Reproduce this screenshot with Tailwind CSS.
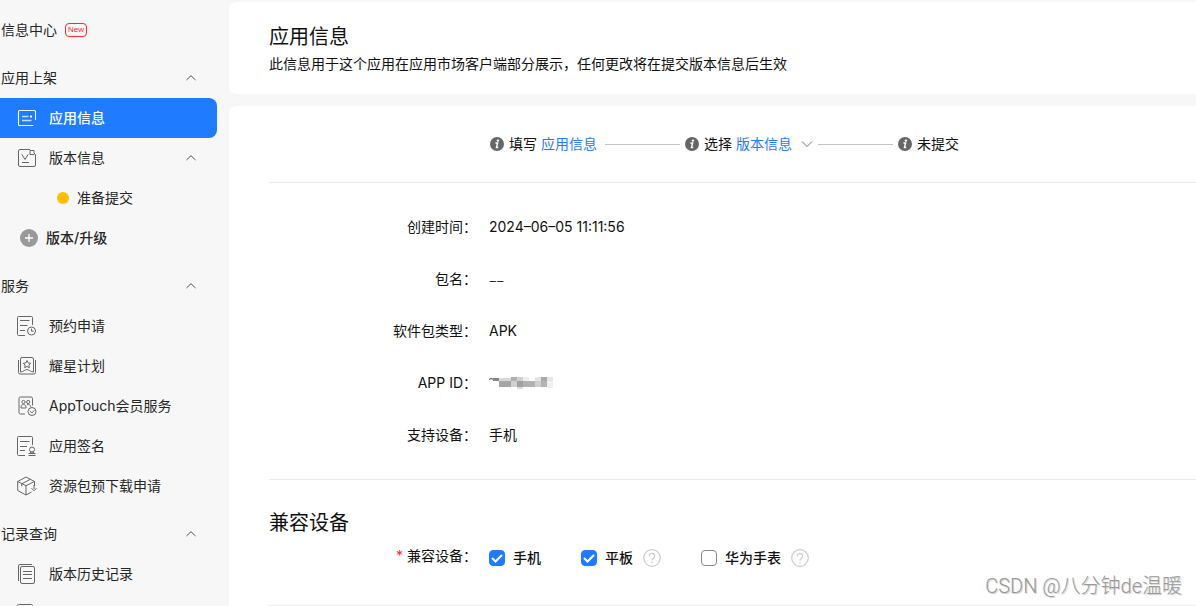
<!DOCTYPE html>
<html lang="zh-CN">
<head>
<meta charset="utf-8">
<meta name="viewport" content="width=device-width, initial-scale=1">
<title>应用信息</title>
<script src="https://cdn.jsdelivr.net/npm/@tailwindcss/browser@4"></script>
</head>
<body class="flex h-screen overflow-hidden bg-[#f7f7f7] font-[Inter,'Noto_Sans_CJK_SC',sans-serif] text-sm text-[#262626]">

<svg class="hidden" aria-hidden="true">
  <symbol id="up" viewBox="0 0 12 12"><path d="M1.500 8 6 3.700 10.500 8" fill="none" stroke="currentColor"/></symbol>
  <symbol id="down" viewBox="0 0 12 12"><path d="M1 3.500 6 8.500 11 3.500" fill="none" stroke="currentColor"/></symbol>
  <symbol id="info" viewBox="0 0 16 16"><circle cx="8" cy="8" r="7" fill="#666"/><circle cx="8.900" cy="4.600" r="1.200" fill="#fff"/><path d="M6.400 7.100h2.200L7.500 11.400h1.800" fill="none" stroke="#fff" stroke-width="1.500"/></symbol>
  <symbol id="help" viewBox="0 0 18 18"><circle cx="9" cy="9" r="8.300" fill="none" stroke="#ccc" stroke-width="1.200"/><path d="M6.300 7.200a2.700 2.700 0 1 1 4.200 2.100c-1 .7-1.500 1.100-1.500 2.300" fill="none" stroke="#ccc" stroke-width="1.200"/><circle cx="9" cy="13.600" r=".8" fill="#ccc"/></symbol>
  <symbol id="tick" viewBox="0 0 16 16"><path d="m3 8 3.500 3.500 6.500-6.500" fill="none" stroke="#fff" stroke-width="2"/></symbol>
</svg>

<nav class="flex w-[217px] shrink-0 flex-col gap-2 pt-[10px]">
  <a href="#" class="flex h-10 shrink-0 items-center gap-2 pl-px">信息中心
    <span class="flex h-[14px] items-center rounded-sm border border-[#fa2a2d] px-[2px] font-['Liberation_Sans',sans-serif] text-[8px] leading-none text-[#fa2a2d]">New</span>
  </a>

  <section>
    <button type="button" class="flex h-10 w-full items-center justify-between pl-px pr-5">应用上架<svg class="size-3 text-[#555]"><use href="#up"/></svg></button>
    <a href="#" class="flex h-10 items-center gap-3 rounded-r-lg bg-[#1f7bff] pl-[17px] font-medium text-white">
      <svg class="size-5" viewBox="0 0 20 20" fill="none" stroke="currentColor"><path d="M18.500 12V3.500a1 1 0 0 0-1-1h-15a1 1 0 0 0-1 1v13a1 1 0 0 0 1 1h14" stroke-width="1.100"/><path d="M5 8.500h6.500M5 12.500h9.500" stroke-width="1.500" opacity=".75"/><path d="M13 8.500h2" stroke-width="2"/></svg>应用信息</a>
    <button type="button" class="flex h-10 w-full items-center gap-3 pl-[17px] pr-5">
      <svg class="size-5 text-[#666]" viewBox="0 0 20 20" fill="none" stroke="currentColor"><path d="M13 1.500H3a1.500 1.500 0 0 0-1.500 1.500v14A1.500 1.500 0 0 0 3 18.500h14a1.500 1.500 0 0 0 1.500-1.500V6.500L17 5V2.500h-4v4h4.500"/><path d="m4.800 6.300 3.200 5.200 3.200-5.200M5 14.500h7"/></svg><span class="flex-1 text-left">版本信息</span><svg class="size-3 text-[#555]"><use href="#up"/></svg></button>
    <a href="#" class="flex h-10 items-center gap-2 pl-[57px]"><span class="size-3 rounded-full bg-[#ffbf00]"></span>准备提交</a>
    <a href="#" class="flex h-10 items-center gap-2 pl-5 font-medium">
      <svg class="size-[18px]" viewBox="0 0 18 18"><circle cx="9" cy="9" r="9" fill="#999"/><path d="M9 5v8M5 9h8" stroke="#fff" stroke-width="1.300"/></svg>版本/升级</a>
  </section>

  <section>
    <button type="button" class="flex h-10 w-full items-center justify-between pl-px pr-5">服务<svg class="size-3 text-[#555]"><use href="#up"/></svg></button>
    <a href="#" class="flex h-10 items-center gap-3 pl-[17px]">
      <svg class="size-5 text-[#666]" viewBox="0 0 20 20" fill="none" stroke="currentColor"><path d="M15.500 9V1.500a1 1 0 0 0-1-1h-13a1 1 0 0 0-1 1v17a1 1 0 0 0 1 1H8M3 4.500h9.500M3 9.500h7.500M3 14.500h5"/><circle cx="14.500" cy="15" r="4"/><path d="M14.500 12.700v2.500h2.200"/></svg>预约申请</a>
    <a href="#" class="flex h-10 items-center gap-3 pl-[17px]">
      <svg class="size-5 text-[#666]" viewBox="0 0 20 20" fill="none" stroke="currentColor"><path d="M1.500 4v12.500a1.500 1.500 0 0 0 1.500 1.500h14a1.500 1.500 0 0 0 1.500-1.500V4"/><path d="M3.500 16V3A1.500 1.500 0 0 1 5 1.500h10A1.500 1.500 0 0 1 16.500 3v13c-3-.3-5-2.500-6.500-2.500S6.500 15.700 3.500 16z"/><path d="m10 4.500 1.200 2.400 2.500.4-1.800 1.800.4 2.600L10 10.500l-2.300 1.200.4-2.600-1.800-1.800 2.500-.4z"/></svg>耀星计划</a>
    <a href="#" class="flex h-10 items-center gap-3 pl-[17px]">
      <svg class="size-5 text-[#666]" viewBox="0 0 20 20" fill="none" stroke="currentColor"><path d="M15.500 9.500V2.500a1.500 1.500 0 0 0-1.500-1.500H3.500A1.500 1.500 0 0 0 2 2.500v14A1.500 1.500 0 0 0 3.500 18H8"/><circle cx="6.500" cy="6" r="1.600"/><circle cx="11.200" cy="6" r="1.600"/><path d="M4 12v-1.200c0-3 5-3 5 0V12zM10 8.800c2-.8 3.800.3 3.800 2"/><circle cx="15" cy="15.500" r="4"/><path d="m12.900 15 2 2 2.400-2.700"/></svg>AppTouch会员服务</a>
    <a href="#" class="flex h-10 items-center gap-3 pl-[17px]">
      <svg class="size-5 text-[#666]" viewBox="0 0 20 20" fill="none" stroke="currentColor"><path d="M15.500 9V1.500a1 1 0 0 0-1-1h-13a1 1 0 0 0-1 1v17a1 1 0 0 0 1 1H8M3 5.500h9.500M3 10.500h7M3 14.500h5"/><circle cx="15" cy="13.500" r="2.500"/><path d="M14 16l-.5 1h3l-.5-1M11.500 17.500h7M11.500 19.500h7"/></svg>应用签名</a>
    <a href="#" class="flex h-10 items-center gap-3 pl-[17px]">
      <svg class="size-5 text-[#666]" viewBox="0 0 20 20" fill="none" stroke="currentColor" stroke-linejoin="round"><path d="M17.500 10V5.500L9 1 .7 5.500v9L9 19l5.500-3M.7 5.500 9 9.700l8.500-4.200M9 9.700V19M5 7.700 13.300 3.300M4.700 7.800v2.500"/><path d="M17 9v4M14.500 12.200l2.500 2.600 2.500-2.600"/></svg>资源包预下载申请</a>
  </section>

  <section>
    <button type="button" class="flex h-10 w-full items-center justify-between pl-px pr-5">记录查询<svg class="size-3 text-[#555]"><use href="#up"/></svg></button>
    <a href="#" class="flex h-10 items-center gap-3 pl-[17px]">
      <svg class="size-5 text-[#666]" viewBox="0 0 20 20" fill="none" stroke="currentColor"><path d="M15 .5H3A1.500 1.500 0 0 0 1.500 2v15"/><rect x="3.500" y="2.500" width="14" height="17" rx="1.500"/><path d="M6 7.500h9M6 10.500h9M6 14.500h9"/></svg>版本历史记录</a>
    <a href="#" aria-label="更多记录" class="flex h-10 items-center gap-3 pl-[17px]">
      <svg class="size-5 text-[#666]" viewBox="0 0 20 20" fill="none" stroke="currentColor"><path d="M15.500 9V1.500a1 1 0 0 0-1-1h-13a1 1 0 0 0-1 1v17a1 1 0 0 0 1 1H8"/></svg></a>
  </section>
</nav>

<main class="ml-3 flex min-w-0 flex-1 flex-col gap-3 pt-[2px] text-[#111]">
  <header class="rounded-l-lg bg-white pb-[18px] pl-10 pt-5">
    <h1 class="text-xl leading-[30px]">应用信息</h1>
    <p class="leading-6">此信息用于这个应用在应用市场客户端部分展示，任何更改将在提交版本信息后生效</p>
  </header>

  <div class="flex-1 rounded-tl-lg bg-white pl-10">
    <div class="flex h-[77px] items-center border-b border-[#ebebeb] pl-[220px]">
      <span class="flex items-center gap-1"><svg class="size-4"><use href="#info"/></svg>填写 <a href="#" class="text-[#1f7bff]">应用信息</a></span>
      <span class="ml-2 mr-1 h-px w-[75px] bg-[#c4c4c4]"></span>
      <span class="flex items-center gap-1"><svg class="size-4"><use href="#info"/></svg>选择 <a href="#" class="text-[#1f7bff]">版本信息</a></span>
      <button type="button" aria-label="展开版本" class="ml-[9px]"><svg class="size-3 text-[#777]"><use href="#down"/></svg></button>
      <span class="ml-[5px] mr-1 h-px w-[75px] bg-[#c4c4c4]"></span>
      <span class="flex items-center gap-1"><svg class="size-4"><use href="#info"/></svg>未提交</span>
    </div>

    <dl class="grid auto-rows-[52px] grid-cols-[208px_1fr] items-center gap-x-3 border-b border-[#ebebeb] py-[18px]">
      <dt class="text-right">创建时间：</dt><dd>2024–06–05 11:11:56</dd>
      <dt class="text-right">包名：</dt><dd class="font-['Noto_Sans_CJK_SC',sans-serif]">––</dd>
      <dt class="text-right">软件包类型：</dt><dd>APK</dd>
      <dt class="text-right">APP ID：</dt>
      <dd><svg class="h-3 w-16" viewBox="0 0 64 12" shape-rendering="crispEdges" role="img" aria-label="已隐藏">
        <path d="M0 2.500 2 1.500l3 1" stroke="#444" fill="none" shape-rendering="auto"/>
        <path d="M4 1h6v3H4z" fill="#888"/><path d="M10 1h12v3H10z" fill="#d8d8d8"/><path d="M22 0h6v4h-6z" fill="#b0b0b0"/><path d="M28 0h6v4h-6z" fill="#d0d0d0"/><path d="M34 0h6v4h-6z" fill="#eee"/><path d="M46 0h6v4h-6z" fill="#e4e4e4"/><path d="M52 0h6v4h-6z" fill="#a8a8a8"/><path d="M58 0h6v4h-6z" fill="#e6e6e6"/>
        <path d="M10 4h12v6H10z" fill="#a6a6a6"/><path d="M22 4h6v6h-6z" fill="#d0d0d0"/><path d="M28 4h6v6h-6z" fill="#a0a0a0"/><path d="M34 4h12v6H34z" fill="#b0b0b0"/><path d="M46 4h6v6h-6z" fill="#cfcfcf"/><path d="M52 4h6v6h-6z" fill="#b4b4b4"/><path d="M58 4h6v7h-6z" fill="#f0f0f0"/><path d="M28 10h6v2h-6z" fill="#ddd"/>
      </svg></dd>
      <dt class="text-right">支持设备：</dt><dd>手机</dd>
    </dl>

    <section class="h-[126px] border-b border-[#ebebeb] pt-7">
      <h2 class="text-xl leading-[30px]">兼容设备</h2>
      <div class="mt-2 flex gap-3">
        <div class="w-[208px] text-right"><span class="text-[#fa2a2d]">*</span> 兼容设备：</div>
        <div class="flex items-center gap-10 pt-[2px] font-medium">
          <label class="flex items-center gap-2"><span class="grid size-4"><input type="checkbox" checked class="peer col-start-1 row-start-1 size-4 appearance-none rounded border border-[#888] bg-white checked:border-[#1f7bff] checked:bg-[#1f7bff]"><svg class="pointer-events-none invisible col-start-1 row-start-1 size-4 peer-checked:visible"><use href="#tick"/></svg></span>手机</label>
          <div class="flex items-center gap-[10px]"><label class="flex items-center gap-2"><span class="grid size-4"><input type="checkbox" checked class="peer col-start-1 row-start-1 size-4 appearance-none rounded border border-[#888] bg-white checked:border-[#1f7bff] checked:bg-[#1f7bff]"><svg class="pointer-events-none invisible col-start-1 row-start-1 size-4 peer-checked:visible"><use href="#tick"/></svg></span>平板</label><button type="button" aria-label="平板说明"><svg class="size-[18px]"><use href="#help"/></svg></button></div>
          <div class="flex items-center gap-[10px]"><label class="flex items-center gap-2"><span class="grid size-4"><input type="checkbox" class="peer col-start-1 row-start-1 size-4 appearance-none rounded border border-[#888] bg-white checked:border-[#1f7bff] checked:bg-[#1f7bff]"><svg class="pointer-events-none invisible col-start-1 row-start-1 size-4 peer-checked:visible"><use href="#tick"/></svg></span>华为手表</label><button type="button" aria-label="华为手表说明"><svg class="size-[18px]"><use href="#help"/></svg></button></div>
        </div>
      </div>
    </section>
  </div>
</main>

<div class="absolute bottom-[6px] right-[14px] font-[Roboto,'Noto_Sans_CJK_SC',sans-serif] text-xl font-light leading-7 text-[#999] [text-shadow:1px_1px_1px_#ccc]">CSDN @八分钟de温暖</div>
</body>
</html>
